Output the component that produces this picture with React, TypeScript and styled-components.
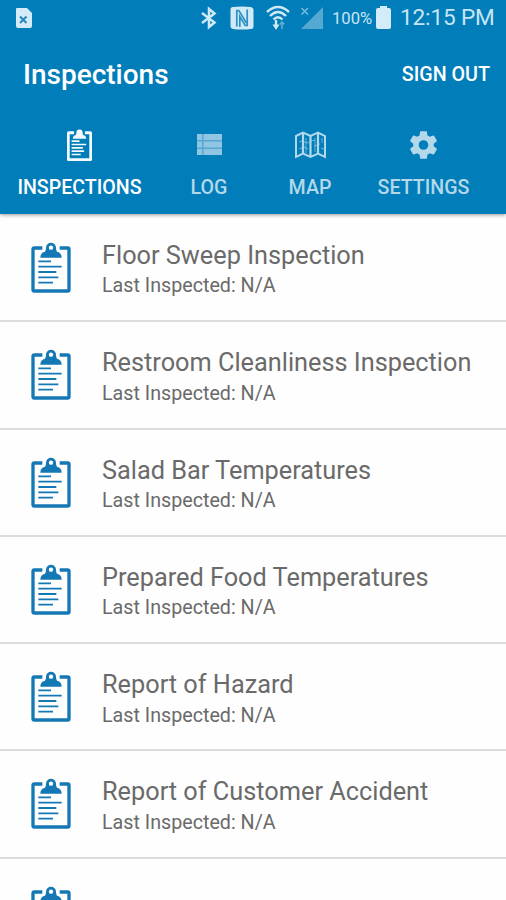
import React from 'react';
import styled, { createGlobalStyle } from 'styled-components';

const GlobalStyle = createGlobalStyle`
  * { box-sizing: border-box; }
  html, body { margin: 0; padding: 0; background: #fefefe; }
  body { font-family: Roboto, "Liberation Sans", sans-serif; overflow: hidden; }
  svg { display: block; flex: none; }
`;

const Screen = styled.div`
  width: 506px;
  height: 900px;
  overflow: hidden;
  background: #fefefe;
  display: flex;
  flex-direction: column;
`;

const Header = styled.header`
  flex: none;
  height: 214px;
  background: #017db9;
  color: #fff;
  box-shadow: 0 1px 4px rgba(0, 0, 0, 0.4);
  z-index: 1;
`;

const StatusBar = styled.div`
  height: 36px;
  padding: 0 12px 0 15px;
  display: flex;
  align-items: center;
  color: #c8e5f5;
`;

const StatusIcons = styled.div`
  margin-left: auto;
  display: flex;
  align-items: center;
`;

const Battery = styled.span`
  width: 40px;
  margin-left: 8px;
  font-size: 16.6px;
  line-height: 20px;
  white-space: nowrap;
  padding-top: 1px;
`;

const Clock = styled.time`
  width: 94px;
  margin-left: 9px;
  font-size: 22.6px;
  line-height: 38px;
  letter-spacing: -0.15px;
  white-space: nowrap;
`;

const TitleBar = styled.div`
  height: 78px;
  padding: 0 16px 0 23px;
  display: flex;
  align-items: center;
  justify-content: space-between;
`;

const Title = styled.h1`
  margin: 0;
  font-size: 28px;
  font-weight: 500;
  line-height: 32px;
`;

const SignOut = styled.button`
  border: 0;
  padding: 0;
  background: none;
  color: #fff;
  font: 500 19.7px/24px Roboto, sans-serif;
`;

const Tabs = styled.nav`
  height: 100px;
  display: grid;
  grid-template-columns: 159px 100px 102px 125px;
`;

const Tab = styled.a<{ $active?: boolean }>`
  display: flex;
  flex-direction: column;
  align-items: center;
  color: ${(p) => (p.$active ? '#fff' : '#b3d8ea')};
  font-size: 19.6px;
  font-weight: 500;
  line-height: 26px;
  white-space: nowrap;
`;

const TabIcon = styled.span`
  height: 61px;
  display: flex;
  align-items: center;
`;

const List = styled.ul`
  margin: 0;
  padding: 1px 0 0;
  list-style: none;
`;

const Row = styled.li`
  height: 107.3px;
  border-bottom: 2px solid #dcdcdc;
  padding: 27px 0 0 31px;
  display: flex;
  align-items: flex-start;
  gap: 31px;
`;

const RowText = styled.div`
  color: #6a6a6a;
  white-space: nowrap;
`;

const RowTitle = styled.div`
  font-size: 25.3px;
  line-height: 28px;
`;

const RowMeta = styled.div`
  margin-top: 4.4px;
  font-size: 19.7px;
  line-height: 24px;
`;

type ClipboardProps = { color: string; width: number; height: number; solidClip?: boolean };

const Clipboard = ({ color, width, height, solidClip }: ClipboardProps) => (
  <svg width={width} height={height} viewBox="64 50 120 153" preserveAspectRatio="none" fill="none" stroke={color}>
    <path d="M98 68H74Q70 68 70 72V193Q70 197 74 197H174Q178 197 178 193V72Q178 68 174 68H150" strokeWidth={solidClip ? 14 : 10} />
    <path
      d="M92 97Q92 82 106 79Q109 77 109 67A15 15 0 0 1 139 67Q139 77 142 79Q156 82 156 97Z"
      fill={color}
      stroke="none"
    />
    {!solidClip && <circle cx="124" cy="67" r="6.5" fill="#fefefe" stroke="none" />}
    <path d="M86 108H124M86 124H156M86 140H140M86 156H146M86 172H130" strokeWidth={solidClip ? 8 : 5.5} />
  </svg>
);

const FileAlert = () => (
  <svg width="18" height="22" viewBox="0 0 18 22">
    <path d="M2 1H12L17 6V19Q17 21 15 21H3Q1 21 1 19V2Q1 1 2 1Z" fill="#d4ecf9" />
    <path d="M5 9.5L11.5 16M11.5 9.5L5 16" stroke="#2686ba" strokeWidth="2" />
  </svg>
);

const Bluetooth = () => (
  <svg width="18" height="24" viewBox="0 0 18 24" fill="none" stroke="#cfe9f7" strokeWidth="2.5">
    <path d="M2 7L14.5 16.5L9 21V3L14.5 7.5L2 17" />
  </svg>
);

const Nfc = () => (
  <svg width="24" height="24" viewBox="0 0 24 24" fill="none">
    <path d="M3 1Q12 0 21 1Q24 2 23.5 5V19Q24 23 21 23Q12 24 3 23Q0 22 .5 19V5Q0 1 3 1Z" fill="#d0e9f6" />
    <path d="M6.8 20.5V4.5H8.8L16.5 17" stroke="#2b90c4" strokeWidth="1.7" />
    <path d="M17.2 3.5V19.5H15.2L9.8 10.5V21" stroke="#2b90c4" strokeWidth="1.7" />
  </svg>
);

const Wifi = () => (
  <svg width="24" height="26" viewBox="0 0 24 26" fill="none" stroke="#cfe9f7" strokeWidth="2.4">
    <path d="M1 7Q12 -3 23 7M4 11Q12 3 20 11M7.5 14.5Q12 10 16.5 14.5" />
    <path d="M10 15V21" />
    <path d="M6.5 19.5L10 25L13.5 19.5Z" fill="#cfe9f7" stroke="none" />
    <path d="M16 24V18M13.8 19.5L16 17L18.2 19.5" stroke="#61acd1" strokeWidth="1.6" />
  </svg>
);

const Signal = () => (
  <svg width="24" height="24" viewBox="0 0 24 24">
    <path d="M1 23L23 1V23Z" fill="#54a8d1" />
    <path d="M1.5 2L8 8.5M8 2L1.5 8.5" stroke="#72b7da" strokeWidth="1.7" />
  </svg>
);

const BatteryIcon = () => (
  <svg width="15" height="23" viewBox="0 0 15 23" fill="#d4ecf9">
    <path d="M4 0H11V2H13Q15 2 15 4V21Q15 23 13 23H2Q0 23 0 21V4Q0 2 2 2H4Z" />
  </svg>
);

const LogIcon = () => (
  <svg width="25" height="21" viewBox="0 0 25 21">
    <path d="M0 0H25V21H0Z" fill="#55a8d0" />
    <path d="M0 0H5V6H0ZM6.5 0H25V6H6.5ZM0 7.5H5V13.5H0ZM6.5 7.5H25V13.5H6.5ZM0 15H5V21H0ZM6.5 15H25V21H6.5Z" fill="#90c6e1" />
  </svg>
);

const MapIcon = () => (
  <svg width="31" height="28" viewBox="0 0 31 28" fill="none" stroke="#b3d8ea">
    <path d="M1 5L8 1.5L15.5 5L23 1.5L30 5V26L23 22.5L15.5 26L8 22.5L1 26Z" strokeWidth="2" />
    <path d="M8 2V22.5M15.5 5V26M23 2V22.5" strokeWidth="2.2" />
    <path d="M4 11L7 10L12 12L16 10L20 9M4 18L9 16L13 18M11 7V22M20 7V21M19 15L25 13M27 7V12M26 17L29 18" strokeWidth="1" opacity=".6" />
  </svg>
);

const Gear = () => (
  <svg width="33" height="34" viewBox="0 0 24 24" fill="#b3d8ea">
    <path d="M19.43 12.98c.04-.32.07-.64.07-.98s-.03-.66-.07-.98l2.11-1.65c.19-.15.24-.42.12-.64l-2-3.46c-.12-.22-.39-.3-.61-.22l-2.49 1c-.52-.4-1.08-.73-1.69-.98l-.38-2.65C14.46 2.18 14.25 2 14 2h-4c-.25 0-.46.18-.49.42l-.38 2.65c-.61.25-1.17.59-1.69.98l-2.49-1c-.23-.09-.49 0-.61.22l-2 3.46c-.13.22-.07.49.12.64l2.11 1.65c-.04.32-.07.65-.07.98s.03.66.07.98l-2.11 1.65c-.19.15-.24.42-.12.64l2 3.46c.12.22.39.3.61.22l2.49-1c.52.4 1.08.73 1.69.98l.38 2.65c.03.24.24.42.49.42h4c.25 0 .46-.18.49-.42l.38-2.65c.61-.25 1.17-.59 1.69-.98l2.49 1c.23.09.49 0 .61-.22l2-3.46c.12-.22.07-.49-.12-.64l-2.11-1.65zM12 15.5A3.5 3.5 0 1 1 12 8.5A3.5 3.5 0 0 1 12 15.5z" />
  </svg>
);

const StatusGlyph = styled.span<{ $gap: number }>`
  margin: -1px 0 0 ${(p) => p.$gap}px;
`;

const tabs = [
  { label: 'INSPECTIONS', icon: <Clipboard color="#f4fbff" width={25} height={32} solidClip />, active: true },
  { label: 'LOG', icon: <LogIcon /> },
  { label: 'MAP', icon: <MapIcon /> },
  { label: 'SETTINGS', icon: <Gear /> },
];

const inspections = [
  'Floor Sweep Inspection',
  'Restroom Cleanliness Inspection',
  'Salad Bar Temperatures',
  'Prepared Food Temperatures',
  'Report of Hazard',
  'Report of Customer Accident',
];

export default function App() {
  return (
    <Screen>
      <GlobalStyle />
      <Header>
        <StatusBar>
          <FileAlert />
          <StatusIcons>
            <StatusGlyph $gap={0}><Bluetooth /></StatusGlyph>
            <StatusGlyph $gap={12}><Nfc /></StatusGlyph>
            <StatusGlyph $gap={12}><Wifi /></StatusGlyph>
            <StatusGlyph $gap={10}><Signal /></StatusGlyph>
            <Battery>100%</Battery>
            <StatusGlyph $gap={4}><BatteryIcon /></StatusGlyph>
            <Clock>12:15 PM</Clock>
          </StatusIcons>
        </StatusBar>
        <TitleBar>
          <Title>Inspections</Title>
          <SignOut>SIGN OUT</SignOut>
        </TitleBar>
        <Tabs>
          {tabs.map((t) => (
            <Tab key={t.label} $active={t.active}>
              <TabIcon>{t.icon}</TabIcon>
              {t.label}
            </Tab>
          ))}
        </Tabs>
      </Header>
      <List>
        {inspections.map((name) => (
          <Row key={name}>
            <Clipboard color="#1478b4" width={40} height={51} />
            <RowText>
              <RowTitle>{name}</RowTitle>
              <RowMeta>Last Inspected: N/A</RowMeta>
            </RowText>
          </Row>
        ))}
        <Row>
          <Clipboard color="#1478b4" width={40} height={51} />
        </Row>
      </List>
    </Screen>
  );
}
